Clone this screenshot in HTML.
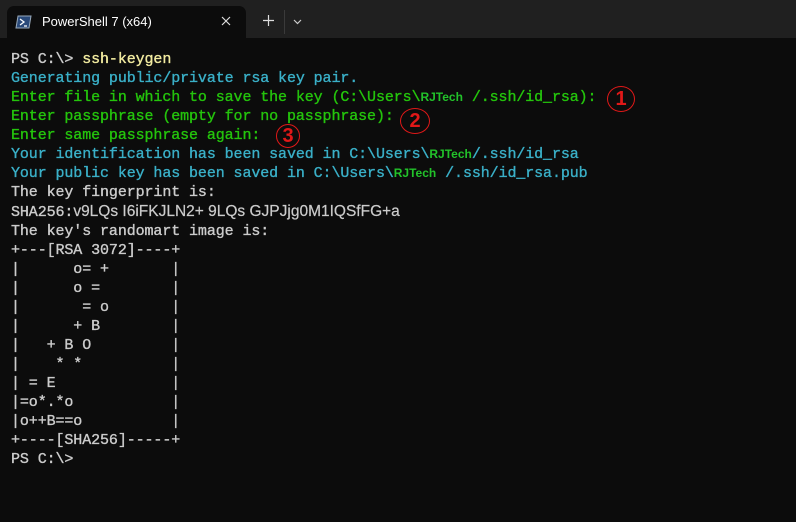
<!DOCTYPE html>
<html><head><style>
body{margin:0;width:796px;height:522px;background:#0c0c0c;overflow:hidden;position:relative;font-family:"Liberation Mono",monospace;}
.bar{position:absolute;left:0;top:0;width:796px;height:38px;background:#202020;}
.tab{position:absolute;left:7px;top:6px;width:239px;height:32px;background:#0c0c0c;border-radius:7px 7px 0 0;}
.tt{position:absolute;left:42px;top:14px;font:13px "Liberation Sans",sans-serif;color:#fff;}
.term{position:absolute;left:11px;top:50px;font-size:15px;line-height:19px;color:#cccccc;white-space:pre;-webkit-text-stroke:0.35px;letter-spacing:-0.1px;}
.c{color:#3ab0c8}.g{color:#24c40c}.y{color:#f2eba0}
.rj{font:bold 12px "Liberation Sans",sans-serif;color:#22c22a;-webkit-text-stroke:0;letter-spacing:0}
.s{font-family:"Liberation Sans",sans-serif;font-size:15.5px;-webkit-text-stroke:0.2px;letter-spacing:0}
.n{position:absolute;color:#e01818;font:bold 20px "Liberation Sans",sans-serif;border:1.5px solid #e01818;border-radius:50%;text-align:center;}
</style></head><body>
<div class="bar"></div>
<div class="tab"></div>
<svg style="position:absolute;left:15px;top:15px" width="17" height="14"><polygon points="3,1 16,1 14,13 1,13" fill="#2a4a7a" stroke="#9ab" stroke-width="1"/><path d="M5 4 L9 7 L5 10 M9 11 H12" stroke="#fff" stroke-width="1.3" fill="none"/></svg>
<div class="tt">PowerShell 7 (x64)</div>
<svg style="position:absolute;left:221px;top:16px" width="10" height="10"><path d="M1 1L9 9M9 1L1 9" stroke="#ddd" stroke-width="1.2"/></svg>
<svg style="position:absolute;left:263px;top:15px" width="11" height="11"><path d="M5.5 0V11M0 5.5H11" stroke="#ddd" stroke-width="1.2"/></svg>
<div style="position:absolute;left:284px;top:10px;width:1px;height:24px;background:#3a3a3a"></div>
<svg style="position:absolute;left:293px;top:19px" width="9" height="6"><path d="M1 1L4.5 4.5L8 1" stroke="#ccc" stroke-width="1.2" fill="none"/></svg>
<div class="term">PS C:\&gt; <span class="y">ssh-keygen</span>
<span class="c">Generating public/private rsa key pair.</span>
<span class="g">Enter file in which to save the key (C:\Users\<span class="rj">RJTech</span> /.ssh/id_rsa):</span>
<span class="g">Enter passphrase (empty for no passphrase):</span>
<span class="g">Enter same passphrase again:</span>
<span class="c">Your identification has been saved in C:\Users\<span class="rj">RJTech</span>/.ssh/id_rsa</span>
<span class="c">Your public key has been saved in C:\Users\<span class="rj">RJTech</span> /.ssh/id_rsa.pub</span>
The key fingerprint is:
SHA256:<span class="s">v9LQs I6iFKJLN2+ 9LQs GJPJjg0M1IQSfFG+a</span>
The key's randomart image is:
+---[RSA 3072]----+
|      o= +       |
|      o =        |
|       = o       |
|      + B        |
|   + B O         |
|    * *          |
| = E             |
|=o*.*o           |
|o++B==o          |
+----[SHA256]-----+
PS C:\&gt;</div>
<div class="n" style="left:607px;top:86px;width:26px;height:24px;line-height:24px">1</div>
<div class="n" style="left:400px;top:108px;width:28px;height:24px;line-height:24px">2</div>
<div class="n" style="left:276px;top:124px;width:22px;height:22px;line-height:22px">3</div>
</body></html>
